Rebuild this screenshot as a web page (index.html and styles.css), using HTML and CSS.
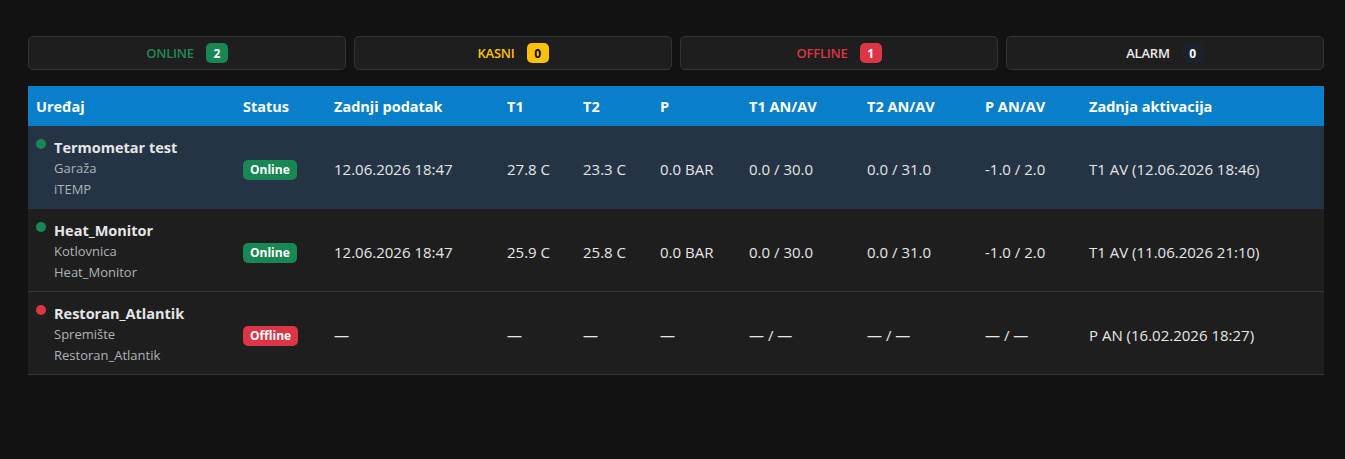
FILE: index.html
```html
<!DOCTYPE html>
<html lang="hr">
<head>
<meta charset="utf-8">
<title>Uređaji</title>
<link rel="stylesheet" href="styles.css">
</head>
<body>
<div class="page">
  <div class="summary">
    <div class="card"><span class="label green">ONLINE</span><span class="count bg-green">2</span></div>
    <div class="card"><span class="label yellow">KASNI</span><span class="count bg-yellow">0</span></div>
    <div class="card"><span class="label red">OFFLINE</span><span class="count bg-red">1</span></div>
    <div class="card"><span class="label light">ALARM</span><span class="count bg-dark">0</span></div>
  </div>

  <table class="devices">
    <colgroup>
      <col class="c-dev"><col class="c-status"><col class="c-last"><col class="c-t1"><col class="c-t2"><col class="c-p"><col class="c-t1a"><col class="c-t2a"><col class="c-pa"><col class="c-act">
    </colgroup>
    <thead>
      <tr>
        <th>Uređaj</th><th>Status</th><th>Zadnji podatak</th><th>T1</th><th>T2</th><th>P</th><th>T1 AN/AV</th><th>T2 AN/AV</th><th>P AN/AV</th><th>Zadnja aktivacija</th>
      </tr>
    </thead>
    <tbody>
      <tr class="active">
        <td>
          <div class="dev">
            <span class="dot dot-green"></span>
            <div class="dev-info">
              <div class="dev-name">Termometar test</div>
              <div class="dev-sub">Garaža</div>
              <div class="dev-sub">iTEMP</div>
            </div>
          </div>
        </td>
        <td><span class="pill pill-green">Online</span></td>
        <td>12.06.2026 18:47</td>
        <td>27.8 C</td>
        <td>23.3 C</td>
        <td>0.0 BAR</td>
        <td>0.0 / 30.0</td>
        <td>0.0 / 31.0</td>
        <td>-1.0 / 2.0</td>
        <td>T1 AV (12.06.2026 18:46)</td>
      </tr>
      <tr>
        <td>
          <div class="dev">
            <span class="dot dot-green"></span>
            <div class="dev-info">
              <div class="dev-name">Heat_Monitor</div>
              <div class="dev-sub">Kotlovnica</div>
              <div class="dev-sub">Heat_Monitor</div>
            </div>
          </div>
        </td>
        <td><span class="pill pill-green">Online</span></td>
        <td>12.06.2026 18:47</td>
        <td>25.9 C</td>
        <td>25.8 C</td>
        <td>0.0 BAR</td>
        <td>0.0 / 30.0</td>
        <td>0.0 / 31.0</td>
        <td>-1.0 / 2.0</td>
        <td>T1 AV (11.06.2026 21:10)</td>
      </tr>
      <tr>
        <td>
          <div class="dev">
            <span class="dot dot-red"></span>
            <div class="dev-info">
              <div class="dev-name">Restoran_Atlantik</div>
              <div class="dev-sub">Spremište</div>
              <div class="dev-sub">Restoran_Atlantik</div>
            </div>
          </div>
        </td>
        <td><span class="pill pill-red">Offline</span></td>
        <td>—</td>
        <td>—</td>
        <td>—</td>
        <td>—</td>
        <td>— / —</td>
        <td>— / —</td>
        <td>— / —</td>
        <td>P AN (16.02.2026 18:27)</td>
      </tr>
    </tbody>
  </table>
</div>
</body>
</html>
```

FILE: styles.css
```css
html, body {
  margin: 0;
  padding: 0;
  background: #121212;
}
body {
  font-family: "Open Sans", "Noto Sans", "DejaVu Sans", sans-serif;
  color: #e6e6e6;
  font-size: 14px;
}
.page {
  width: 1296px;
  padding: 36px 0 0 28px;
}
.summary {
  display: grid;
  grid-template-columns: repeat(4, 1fr);
  gap: 8px;
  margin-bottom: 16px;
}
.card {
  height: 34px;
  box-sizing: border-box;
  background: #1e1e1e;
  border: 1px solid #333;
  border-radius: 5px;
  display: flex;
  align-items: center;
  justify-content: center;
  gap: 12px;
}
.label {
  font-size: 13px;
  font-weight: 600;
  letter-spacing: -0.2px;
}
.green { color: #1f8a56; }
.yellow { color: #ffc107; }
.red { color: #dc3545; }
.light { color: #e9ecef; }
.count {
  display: inline-flex;
  align-items: center;
  justify-content: center;
  min-width: 22px;
  height: 20px;
  border-radius: 5px;
  font-size: 12px;
  font-weight: 700;
  box-sizing: border-box;
  padding: 0 6px;
}
.bg-green { background: #198754; color: #fff; }
.bg-yellow { background: #ffc107; color: #000; }
.bg-red { background: #dc3545; color: #fff; }
.bg-dark { background: #1b212b; color: #fff; }

.devices {
  width: 1296px;
  table-layout: fixed;
  border-collapse: collapse;
  font-size: 15px;
}
.c-dev { width: 207px; }
.c-status { width: 91px; }
.c-last { width: 173px; }
.c-t1 { width: 76px; }
.c-t2 { width: 77px; }
.c-p { width: 89px; }
.c-t1a { width: 118px; }
.c-t2a { width: 118px; }
.c-pa { width: 104px; }
.c-act { width: 243px; }

.devices th {
  background: #0a7fc9;
  color: #fff;
  text-align: left;
  font-weight: 700;
  height: 40px;
  padding: 0 8px;
  font-size: 14.5px;
}
.devices td {
  background: #1e1e1e;
  padding: 11px 8px 8px;
  vertical-align: middle;
  border-bottom: 1px solid #333;
  height: 63px;
  white-space: nowrap;
}
.devices tr.active td {
  background: #243444;
  border-bottom-color: #243444;
}
.dev {
  display: flex;
  align-items: flex-start;
  gap: 8px;
}
.dot {
  width: 10px;
  height: 10px;
  border-radius: 50%;
  margin-top: 2px;
  flex: none;
}
.dot-green { background: #198754; }
.dot-red { background: #dc3545; }
.dev-name {
  font-weight: 700;
  font-size: 14.5px;
  line-height: 21px;
}
.dev-sub {
  font-size: 13px;
  color: #aeb3b8;
  line-height: 21px;
}
.pill {
  display: inline-block;
  height: 20px;
  line-height: 20px;
  padding: 0 7px;
  border-radius: 5px;
  font-size: 12px;
  font-weight: 700;
  color: #fff;
}
.pill-green { background: #198754; }
.pill-red { background: #dc3545; }
```
